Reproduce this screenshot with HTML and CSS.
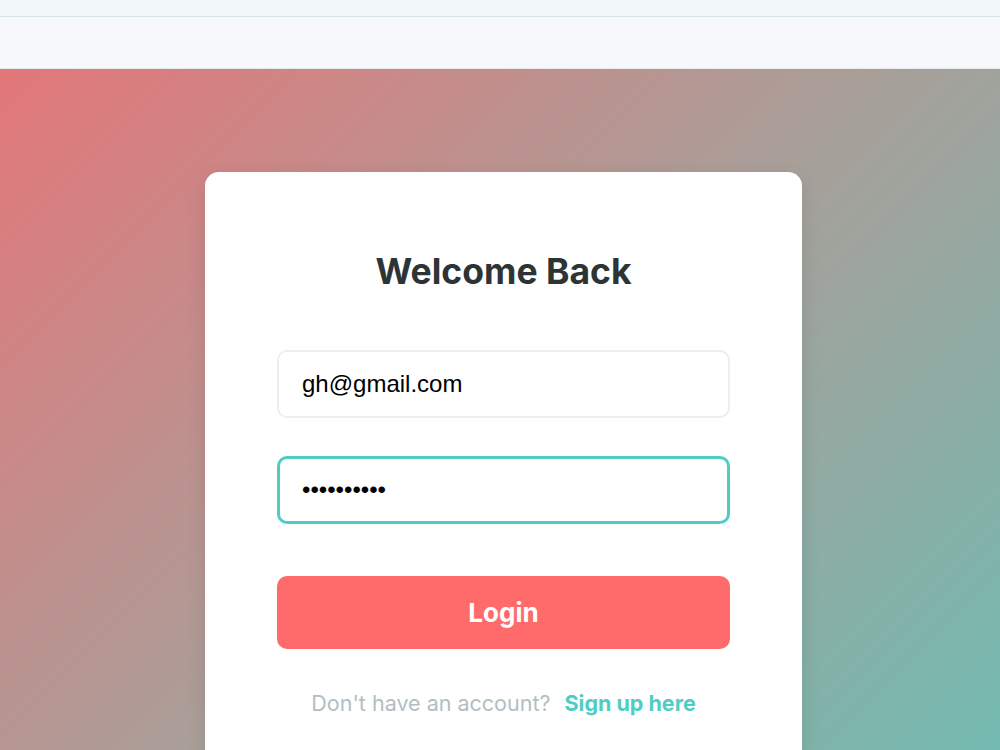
FILE: index.html
```html
<!DOCTYPE html>
<html lang="en">
<head>
    <meta charset="UTF-8">
    <meta name="viewport" content="width=device-width, initial-scale=1.0">
    <title>Login</title>
    <link rel="stylesheet" href="styles.css">
</head>
<body>
    <div class="topbar"></div>
    <div class="navbar"></div>

    <main class="auth-page">
        <div class="auth-card">
            <h1>Welcome Back</h1>

            <form class="auth-form" onsubmit="return false">
                <input type="email" class="field" value="gh@gmail.com" placeholder="Email">
                <input type="password" class="field field-active" value="1234567890" placeholder="Password">
                <button type="submit" class="btn-login">Login</button>
            </form>

            <p class="switch">Don't have an account? <a href="#">Sign up here</a></p>
        </div>
    </main>
</body>
</html>
```

FILE: styles.css
```css
* {
    box-sizing: border-box;
    margin: 0;
    padding: 0;
}

body {
    font-family: "Inter", "Liberation Sans", sans-serif;
    background-color: #f6f8fc;
    height: 750px;
    overflow: hidden;
}

.topbar {
    height: 17px;
    background-color: #f3f8fb;
    border-bottom: 1px solid #d8e4e7;
}

.navbar {
    height: 52px;
    background-color: #f6f8fc;
    border-bottom: 1px solid #e9eaee;
}

.auth-page {
    display: flex;
    justify-content: center;
    padding: 103px 0 0 7px;
    height: 681px;
    overflow: hidden;
    background: linear-gradient(135deg, #e3777a 0%, #a99f99 52%, #73bab0 100%);
}

.auth-card {
    width: 597px;
    height: 700px;
    flex-shrink: 0;
    background-color: #fff;
    border-radius: 14px;
    box-shadow: 0 6px 20px rgba(0, 0, 0, 0.1);
    padding: 79px 72px 0;
}

h1 {
    font-family: "Inter", sans-serif;
    font-size: 35.5px;
    font-weight: 700;
    line-height: 41px;
    text-align: center;
    color: #2d3436;
}

.auth-form {
    display: flex;
    flex-direction: column;
    margin-top: 58px;
}

.field {
    height: 68px;
    width: 100%;
    padding: 0 23px;
    border: 2px solid #eeeeee;
    border-radius: 10px;
    font-family: "Liberation Sans", Arial, sans-serif;
    font-size: 24px;
    color: #000;
    outline: none;
}

.field + .field {
    margin-top: 38px;
}

.field-active {
    border: 3px solid #4ecdc4;
    padding: 0 22px;
}

.btn-login {
    margin-top: 52px;
    height: 73px;
    border: none;
    border-radius: 10px;
    background-color: #ff6b6b;
    color: #fff;
    font-family: "Inter", sans-serif;
    font-size: 26px;
    font-weight: 700;
    cursor: pointer;
}

.switch {
    margin-top: 40px;
    text-align: center;
    font-size: 21.5px;
    line-height: 28px;
    color: #b2bec3;
}

.switch a {
    margin-left: 8px;
    color: #4ecdc4;
    font-weight: 700;
    text-decoration: none;
}
```
